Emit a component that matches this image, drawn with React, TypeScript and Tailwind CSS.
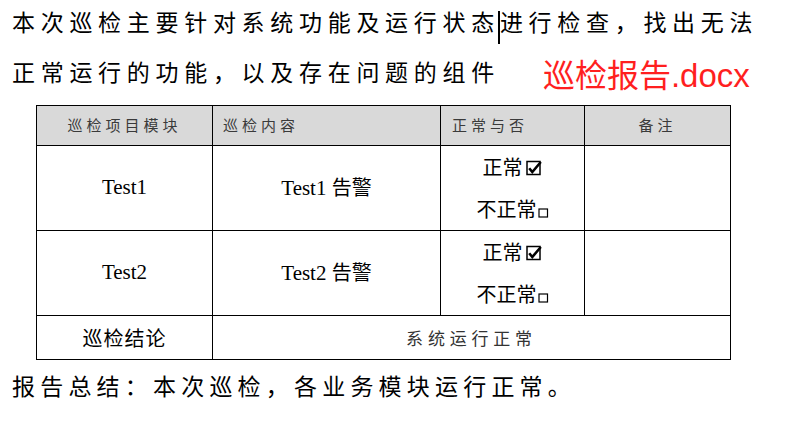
import React from "react";

const cjk = "font-['Noto_Sans_CJK_SC',sans-serif]";

function Checked() {
  return (
    <svg width="17" height="16" viewBox="0 0 17 16" className="inline-block ml-[3px] align-[-1px]">
      <rect x="1" y="1.5" width="13" height="13" fill="none" stroke="#000" strokeWidth="1.5" />
      <path d="M3.2 8.2 L6.3 12 L14.8 2" fill="none" stroke="#000" strokeWidth="2.6" />
    </svg>
  );
}

function Unchecked() {
  return (
    <svg width="11" height="10" viewBox="0 0 11 10" className="inline-block ml-[1px] align-[-1px]">
      <rect x="1" y="1" width="8.5" height="8" fill="none" stroke="#000" strokeWidth="1.2" />
    </svg>
  );
}

function StatusCell() {
  return (
    <td className="border border-black text-center text-[20px] leading-[42px] text-black">
      <div>
        正常
        <Checked />
      </div>
      <div>
        不正常
        <Unchecked />
      </div>
    </td>
  );
}

export default function App() {
  return (
    <div className={`w-[798px] h-[430px] bg-white overflow-hidden text-black ${cjk}`}>
      <div className="pl-3 -mt-[3px] text-[23px] leading-[48px] tracking-[5.7px]">
        <div className="whitespace-nowrap">
          本次巡检主要针对系统功能及运行状
          <span className="relative">
            态
            <span className="absolute left-[27px] top-[7px] w-[2px] h-[33px] bg-black" />
          </span>
          进行检查，找出无法
        </div>
        <div className="flex items-center whitespace-nowrap">
          <span>正常运行的功能，以及存在问题的组件</span>
          <span className="ml-[43px] mt-[8px] text-[32px] leading-[40px] tracking-normal text-[#ff1f1f] font-['Noto_Sans_CJK_SC','Liberation_Sans',sans-serif]">
            巡检报告
            <span className="font-['Liberation_Sans',sans-serif] text-[33px]">.docx</span>
          </span>
        </div>
      </div>

      <table className="ml-[36px] mt-[9px] w-[694px] table-fixed border-collapse">
        <colgroup>
          <col className="w-[176px]" />
          <col className="w-[228px]" />
          <col className="w-[144px]" />
          <col className="w-[146px]" />
        </colgroup>
        <tbody>
          <tr className="h-[40px] bg-[#d9d9d9] text-[15px] tracking-[4px] text-[#3a3a3a]">
            <td className="border border-black text-center">巡检项目模块</td>
            <td className="border border-black pl-[10px]">巡检内容</td>
            <td className="border border-black pl-[11px]">正常与否</td>
            <td className="border border-black text-center">备注</td>
          </tr>
          <tr className="h-[85px]">
            <td className="border border-black text-center text-[21px] font-['Liberation_Serif','Noto_Sans_CJK_SC',serif]">Test1</td>
            <td className="border border-black text-center text-[21px] font-['Liberation_Serif','Noto_Sans_CJK_SC',serif]">
              Test1 <span className={`${cjk} text-[20px]`}>告警</span>
            </td>
            <StatusCell />
            <td className="border border-black" />
          </tr>
          <tr className="h-[85px]">
            <td className="border border-black text-center text-[21px] font-['Liberation_Serif','Noto_Sans_CJK_SC',serif]">Test2</td>
            <td className="border border-black text-center text-[21px] font-['Liberation_Serif','Noto_Sans_CJK_SC',serif]">
              Test2 <span className={`${cjk} text-[20px]`}>告警</span>
            </td>
            <StatusCell />
            <td className="border border-black" />
          </tr>
          <tr className="h-[44px]">
            <td className="border border-black text-center text-[20px] tracking-[1px]">巡检结论</td>
            <td colSpan={3} className="border border-black text-center text-[17px] tracking-[4.8px] text-[#333]">
              系统运行正常
            </td>
          </tr>
        </tbody>
      </table>

      <div className="pl-3 mt-[1px] text-[23px] leading-[48px] tracking-[5.2px] whitespace-nowrap">
        报告总结：本次巡检，各业务模块运行正常。
      </div>
    </div>
  );
}
